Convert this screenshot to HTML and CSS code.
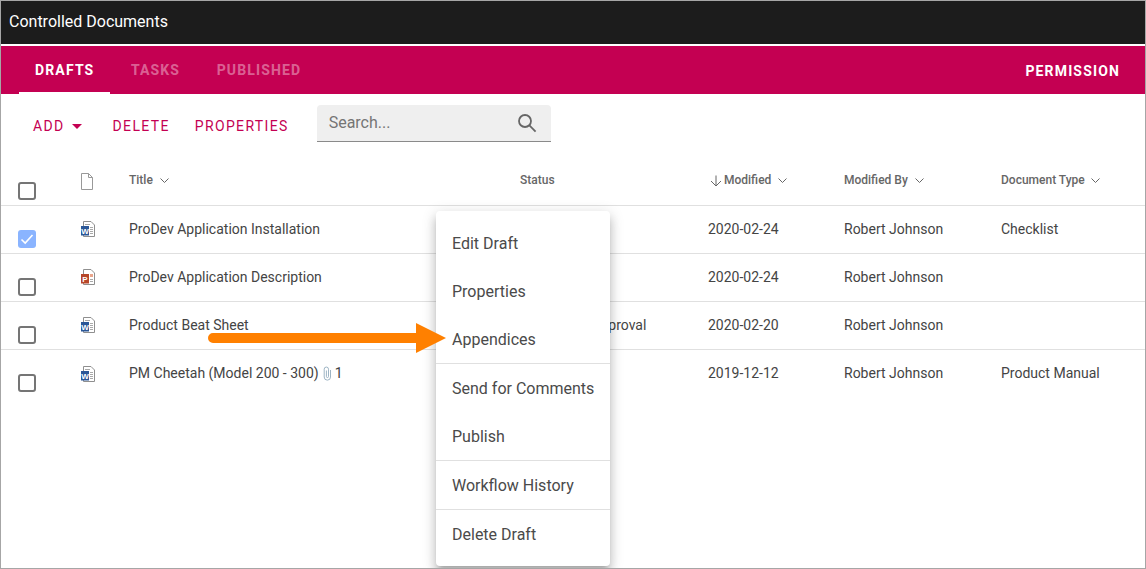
FILE: index.html
```html
<!DOCTYPE html>
<html lang="en">
<head>
    <meta charset="UTF-8">
    <meta name="viewport" content="width=device-width, initial-scale=1.0">
    <title>Controlled Documents</title>
    <link rel="stylesheet" href="styles.css">
</head>
<body>
    <div class="frame">
        <header class="topbar">Controlled Documents</header>

        <nav class="tabs">
            <a class="tab active">DRAFTS</a>
            <a class="tab">TASKS</a>
            <a class="tab">PUBLISHED</a>
            <a class="permission">PERMISSION</a>
        </nav>

        <div class="toolbar">
            <button class="btn btn-add">ADD <span class="caret"></span></button>
            <button class="btn btn-delete">DELETE</button>
            <button class="btn">PROPERTIES</button>
            <div class="search">
                <span class="search-text">Search...</span>
                <svg class="search-icon" width="20" height="20" viewBox="0 0 20 20" fill="none" stroke="#666" stroke-width="1.8">
                    <circle cx="8" cy="8" r="6"/>
                    <path d="M12.4 12.4 L18.6 18.6"/>
                </svg>
            </div>
        </div>

        <div class="row head">
            <div><span class="check"></span></div>
            <div>
                <svg class="page" width="14" height="17" viewBox="0 0 14 17" fill="#fff" stroke="#999">
                    <path d="M1.5 .5 H8.5 L12.5 4.5 V16.5 H1.5 Z M8.5 .5 V4.5 H12.5"/>
                </svg>
            </div>
            <div class="th">Title<svg class="chev" width="9" height="5" viewBox="0 0 9 5"><path d="M.5 .5 L4.5 4.5 L8.5 .5"/></svg></div>
            <div class="th">Status</div>
            <div class="th"><svg class="sort" width="12" height="12" viewBox="0 0 12 12" fill="none" stroke="#666"><path d="M6 .5 V11 M1 6 L6 11 L11 6"/></svg>Modified<svg class="chev" width="9" height="5" viewBox="0 0 9 5"><path d="M.5 .5 L4.5 4.5 L8.5 .5"/></svg></div>
            <div class="th">Modified By<svg class="chev" width="9" height="5" viewBox="0 0 9 5"><path d="M.5 .5 L4.5 4.5 L8.5 .5"/></svg></div>
            <div class="th">Document Type<svg class="chev chev-type" width="9" height="5" viewBox="0 0 9 5"><path d="M.5 .5 L4.5 4.5 L8.5 .5"/></svg></div>
        </div>

        <div class="row">
            <div><span class="check checked"><svg width="14" height="14" viewBox="0 0 14 14" fill="none" stroke="#fff" stroke-width="1.6"><path d="M1.5 7.5 L5.2 11 L12.5 3"/></svg></span></div>
            <div>
                <svg class="doc" width="16" height="17" viewBox="0 0 16 17">
                    <path d="M3.5 1.5 H11 L14.5 5 V16.5 H3.5 Z" fill="#fff" stroke="#8f8f8f"/>
                    <path d="M5 4.5 H10 M10 7.5 H13 M10 9.5 H13 M10 11.5 H13 M10 13.5 H13" stroke="#a9a9a9"/>
                    <rect x="1" y="6" width="8" height="9.5" fill="#2b5797"/>
                    <text x="5" y="13.5" class="doc-letter">W</text>
                </svg>
            </div>
            <div>ProDev Application Installation</div>
            <div></div>
            <div>2020-02-24</div>
            <div>Robert Johnson</div>
            <div>Checklist</div>
        </div>

        <div class="row">
            <div><span class="check"></span></div>
            <div>
                <svg class="doc" width="16" height="17" viewBox="0 0 16 17">
                    <path d="M3.5 1.5 H11 L14.5 5 V16.5 H3.5 Z" fill="#fff" stroke="#8f8f8f"/>
                    <path d="M10 11.5 H13 M10 13.5 H13" stroke="#a9a9a9"/>
                    <rect x="10" y="6" width="3" height="3" fill="#e8a58c"/>
                    <rect x="1" y="6" width="8" height="9.5" fill="#b7472a"/>
                    <text x="5" y="13.5" class="doc-letter">P</text>
                </svg>
            </div>
            <div>ProDev Application Description</div>
            <div></div>
            <div>2020-02-24</div>
            <div>Robert Johnson</div>
            <div></div>
        </div>

        <div class="row">
            <div><span class="check"></span></div>
            <div>
                <svg class="doc" width="16" height="17" viewBox="0 0 16 17">
                    <path d="M3.5 1.5 H11 L14.5 5 V16.5 H3.5 Z" fill="#fff" stroke="#8f8f8f"/>
                    <path d="M5 4.5 H10 M10 7.5 H13 M10 9.5 H13 M10 11.5 H13 M10 13.5 H13" stroke="#a9a9a9"/>
                    <rect x="1" y="6" width="8" height="9.5" fill="#2b5797"/>
                    <text x="5" y="13.5" class="doc-letter">W</text>
                </svg>
            </div>
            <div>Product Beat Sheet</div>
            <div>Waiting for Approval</div>
            <div>2020-02-20</div>
            <div>Robert Johnson</div>
            <div></div>
        </div>

        <div class="row last">
            <div><span class="check"></span></div>
            <div>
                <svg class="doc" width="16" height="17" viewBox="0 0 16 17">
                    <path d="M3.5 1.5 H11 L14.5 5 V16.5 H3.5 Z" fill="#fff" stroke="#8f8f8f"/>
                    <path d="M5 4.5 H10 M10 7.5 H13 M10 9.5 H13 M10 11.5 H13 M10 13.5 H13" stroke="#a9a9a9"/>
                    <rect x="1" y="6" width="8" height="9.5" fill="#2b5797"/>
                    <text x="5" y="13.5" class="doc-letter">W</text>
                </svg>
            </div>
            <div>PM Cheetah (Model 200 - 300)<svg class="clip" width="9" height="15" viewBox="0 0 9 15" fill="none" stroke="#9db4c4" stroke-width="1"><path d="M7.5 4 V11 A3 3 0 0 1 1.2 11 V3.2 A2 2 0 0 1 5.5 3.2 V10.5 A1 1 0 0 1 3.4 10.5 V4.5"/></svg>1</div>
            <div></div>
            <div>2019-12-12</div>
            <div>Robert Johnson</div>
            <div>Product Manual</div>
        </div>

        <ul class="menu">
            <li>Edit Draft</li>
            <li>Properties</li>
            <li class="sep">Appendices</li>
            <li>Send for Comments</li>
            <li class="sep">Publish</li>
            <li class="sep">Workflow History</li>
            <li>Delete Draft</li>
        </ul>

        <svg class="arrow" width="240" height="32" viewBox="0 0 240 32">
            <path d="M5 10 H208 V0 L238 15 L208 30 V20 H5 A5 5 0 0 1 5 10 Z" fill="#ff8000"/>
        </svg>
    </div>
</body>
</html>
```

FILE: styles.css
```css
*{
    margin: 0;
    padding: 0;
    box-sizing: border-box;
}
body{
    font-family: Roboto, "Liberation Sans", sans-serif;
    font-size: 14px;
    color: #444;
    background-color: #fff;
}
.frame{
    position: relative;
    width: 1146px;
    height: 569px;
    border: 1px solid #a6a6a6;
    overflow: hidden;
}
.topbar{
    height: 43px;
    padding: 0 8px 2px;
    display: flex;
    align-items: center;
    background-color: #1c1c1c;
    color: #fff;
    font-size: 16px;
}
.tabs{
    height: 48px;
    margin-top: 2px;
    padding: 0 25px 0 18px;
    display: flex;
    gap: 4.5px;
    background-color: #c40052;
    font-weight: 700;
    letter-spacing: 1.15px;
}
.tab{
    display: flex;
    align-items: center;
    padding: 2px 16px 0;
    color: rgba(255,255,255,0.4);
    border-bottom: 2px solid transparent;
}
.tab.active{
    color: #fff;
    border-bottom-color: #fff;
}
.permission{
    margin-left: auto;
    margin-top: 1px;
    align-self: center;
    color: #fff;
}
.toolbar{
    height: 64px;
    padding-left: 32px;
    display: flex;
    align-items: center;
}
.btn{
    border: none;
    background: none;
    font-family: inherit;
    font-size: 14px;
    letter-spacing: 1.35px;
    color: #c40052;
    display: flex;
    align-items: center;
}
.btn-add{
    gap: 7px;
    margin-right: 31px;
}
.btn-delete{
    margin-right: 25px;
}
.caret{
    width: 0;
    height: 0;
    border-left: 5px solid transparent;
    border-right: 5px solid transparent;
    border-top: 5px solid #c40052;
}
.search{
    width: 234px;
    height: 37px;
    margin-left: 28px;
    margin-top: -5px;
    padding: 0 14px 0 12px;
    display: flex;
    align-items: center;
    justify-content: space-between;
    background-color: #efefef;
    border-bottom: 1px solid #8a8a8a;
    border-radius: 4px 4px 0 0;
}
.search-text{
    margin-top: -2px;
    font-size: 16px;
    color: #757575;
}
.row{
    height: 48px;
    padding-left: 17px;
    padding-bottom: 2px;
    display: grid;
    grid-template-columns: 62px 49px 391px 188px 136px 157px 1fr;
    align-items: center;
    border-bottom: 1px solid #e0e0e0;
    white-space: nowrap;
}
.row.last{
    border-bottom: none;
}
.row.head{
    padding-bottom: 0;
}
.th{
    font-size: 12px;
    font-weight: 500;
    color: #666;
    margin-top: -3px;
}
.chev{
    margin-left: 7px;
    vertical-align: middle;
    fill: none;
    stroke: #666;
}
.chev-type{
    margin-left: 6px;
}
.sort{
    margin: 0 2px 0 2px;
    vertical-align: middle;
}
.check{
    display: flex;
    align-items: center;
    justify-content: center;
    width: 18px;
    height: 18px;
    margin-top: 20px;
    border: 2px solid #757575;
    border-radius: 3px;
}
.head .check{
    margin-top: 18px;
}
.check.checked{
    border: none;
    background-color: #8ab4ff;
}
.doc, .page{
    display: block;
}
.doc-letter{
    font-family: "Liberation Sans", sans-serif;
    font-size: 8px;
    font-weight: 700;
    fill: #fff;
    text-anchor: middle;
}
.clip{
    margin: 0 3px 0 4px;
    vertical-align: middle;
}
.menu{
    position: absolute;
    left: 435px;
    top: 210px;
    width: 174px;
    padding: 8px 0;
    list-style: none;
    background-color: #fff;
    border-radius: 4px;
    box-shadow: 0 5px 5px -3px rgba(0,0,0,0.2), 0 8px 10px 1px rgba(0,0,0,0.14), 0 3px 14px 2px rgba(0,0,0,0.12);
    font-size: 16px;
    color: #4a4a4a;
    white-space: nowrap;
}
.menu li{
    height: 48px;
    padding: 0 16px;
    display: flex;
    align-items: center;
}
.menu li.sep{
    height: 49px;
    border-bottom: 1px solid #e0e0e0;
}
.arrow{
    position: absolute;
    left: 207px;
    top: 322px;
}
```
